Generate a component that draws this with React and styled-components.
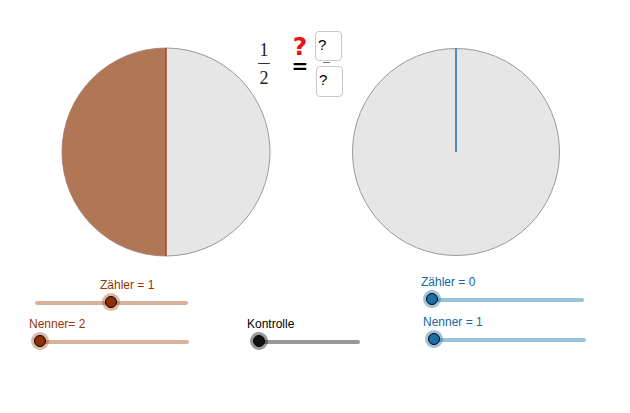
import styled, { createGlobalStyle } from "styled-components";

const GlobalStyle = createGlobalStyle`
    body {
        margin: 0;
        background: #fff;
        font-family: "Liberation Sans", Arial, sans-serif;
    }
`;

const BROWN = { text: "#993300", track: "#d9b09b", knob: "#8f2f05", halo: "rgba(153, 51, 0, 0.35)" };
const BLUE = { text: "#1565a0", track: "#99c3d9", knob: "#1b6ea6", halo: "rgba(21, 101, 160, 0.4)" };
const GRAY = { text: "#000", track: "#999", knob: "#111", halo: "rgba(0, 0, 0, 0.4)" };

// sliders sit on the applet canvas, like in GeoGebra
const sliders = [
    { label: "Zähler = 1", x: 35, y: 278, indent: 65, w: 153, pos: 76, c: BROWN },
    { label: "Nenner= 2", x: 29, y: 317, w: 153, pos: 4, c: BROWN, trackIndent: 7 },
    { label: "Kontrolle", x: 247, y: 317, w: 104, pos: 3, c: GRAY, trackIndent: 9 },
    { label: "Zähler = 0", x: 421, y: 275, w: 152, pos: 0, c: BLUE, trackIndent: 11 },
    { label: "Nenner = 1", x: 423, y: 315, w: 152, pos: 0, c: BLUE, trackIndent: 11 },
];

export default function App() {
    return (
        <>
            <GlobalStyle />
            <Canvas>
                <Pie x={60} y={46}>
                    <svg width="212" height="212" viewBox="0 0 212 212">
                        <circle cx="106" cy="106" r="104" fill="#e6e6e6" stroke="#9a9a9a" strokeWidth="1" />
                        <path d="M106 2 A104 104 0 0 0 106 210 Z" fill="#b07656" />
                        <line x1="106" y1="2" x2="106" y2="210" stroke="#a8461c" strokeWidth="1.5" />
                    </svg>
                </Pie>
                <Pie x={350} y={46}>
                    <svg width="212" height="212" viewBox="0 0 212 212">
                        <circle cx="106" cy="106" r="103.5" fill="#e6e6e6" stroke="#9a9a9a" strokeWidth="1" />
                        <line x1="106" y1="106" x2="106" y2="2.5" stroke="#1a6fb0" strokeWidth="1.5" />
                    </svg>
                </Pie>

                <Equation>
                    <Fraction>
                        <span>1</span>
                        <FracBar />
                        <span>2</span>
                    </Fraction>
                    <Signs>
                        <Question>?</Question>
                        <Equals>=</Equals>
                    </Signs>
                    <Boxes>
                        <InputBox>?</InputBox>
                        <Dash />
                        <InputBox shift={1} tall>?</InputBox>
                    </Boxes>
                </Equation>

                {sliders.map((s) => (
                    <Slider key={s.label} x={s.x} y={s.y}>
                        <SliderLabel color={s.c.text} indent={s.indent || 0}>{s.label}</SliderLabel>
                        <Track color={s.c.track} indent={s.trackIndent || 0} style={{ width: s.w }}>
                            <Knob fill={s.c.knob} halo={s.c.halo} style={{ left: s.pos - 6 }} />
                        </Track>
                    </Slider>
                ))}
            </Canvas>
        </>
    );
}

const Canvas = styled.div`
    position: relative;
    width: 630px;
    height: 413px;
    overflow: hidden;
    background: #fff;
`;

const Pie = styled.div`
    position: absolute;
    left: ${(p) => p.x}px;
    top: ${(p) => p.y}px;
    width: 212px;
    height: 212px;
    svg {
        display: block;
    }
`;

const Equation = styled.div`
    position: absolute;
    left: 257px;
    top: 31px;
    display: flex;
    align-items: flex-start;
`;

const Fraction = styled.div`
    margin-top: 9px;
    width: 14px;
    display: flex;
    flex-direction: column;
    align-items: center;
    font-family: "Liberation Serif", "Times New Roman", serif;
    font-size: 18px;
    line-height: 20px;
    color: #222;
`;

const FracBar = styled.div`
    width: 12px;
    height: 1px;
    background: #333;
    margin: 3px 0 4px;
`;

const Signs = styled.div`
    margin: 5px 0 0 20px;
    width: 18px;
    display: flex;
    flex-direction: column;
    align-items: center;
`;

const Question = styled.div`
    font-family: "DejaVu Sans", sans-serif;
    font-size: 25px;
    line-height: 22px;
    font-weight: bold;
    color: #ee1111;
`;

const Equals = styled.div`
    margin-top: 3px;
    font-family: "DejaVu Sans", sans-serif;
    font-size: 20px;
    line-height: 11px;
    font-weight: bold;
    color: #000;
`;

const Boxes = styled.div`
    margin-left: 6px;
    display: flex;
    flex-direction: column;
    align-items: flex-start;
`;

const InputBox = styled.div`
    margin-left: ${(p) => p.shift || 0}px;
    width: 27px;
    height: ${(p) => (p.tall ? 31 : 30)}px;
    box-sizing: border-box;
    border: 1px solid #c8c8c8;
    border-radius: 4px;
    background: #fff;
    padding: 5px 0 0 2px;
    font-size: 15px;
    line-height: 15px;
    color: #000;
`;

const Dash = styled.div`
    margin: 1px 0 3px 8px;
    width: 7px;
    height: 1px;
    background: #777;
`;

const Slider = styled.div`
    position: absolute;
    left: ${(p) => p.x}px;
    top: ${(p) => p.y}px;
    display: flex;
    flex-direction: column;
    align-items: flex-start;
    gap: 9px;
`;

const SliderLabel = styled.div`
    margin-left: ${(p) => p.indent}px;
    color: ${(p) => p.color};
    font-size: 12px;
    line-height: 14px;
    white-space: nowrap;
`;

const Track = styled.div`
    position: relative;
    margin-left: ${(p) => p.indent}px;
    height: 4px;
    border-radius: 2px;
    background: ${(p) => p.color};
`;

const Knob = styled.div`
    position: absolute;
    top: -5px;
    width: 12px;
    height: 12px;
    box-sizing: border-box;
    border-radius: 50%;
    border: 1px solid #000;
    background: ${(p) => p.fill};
    box-shadow: 0 0 0 3px ${(p) => p.halo};
`;
